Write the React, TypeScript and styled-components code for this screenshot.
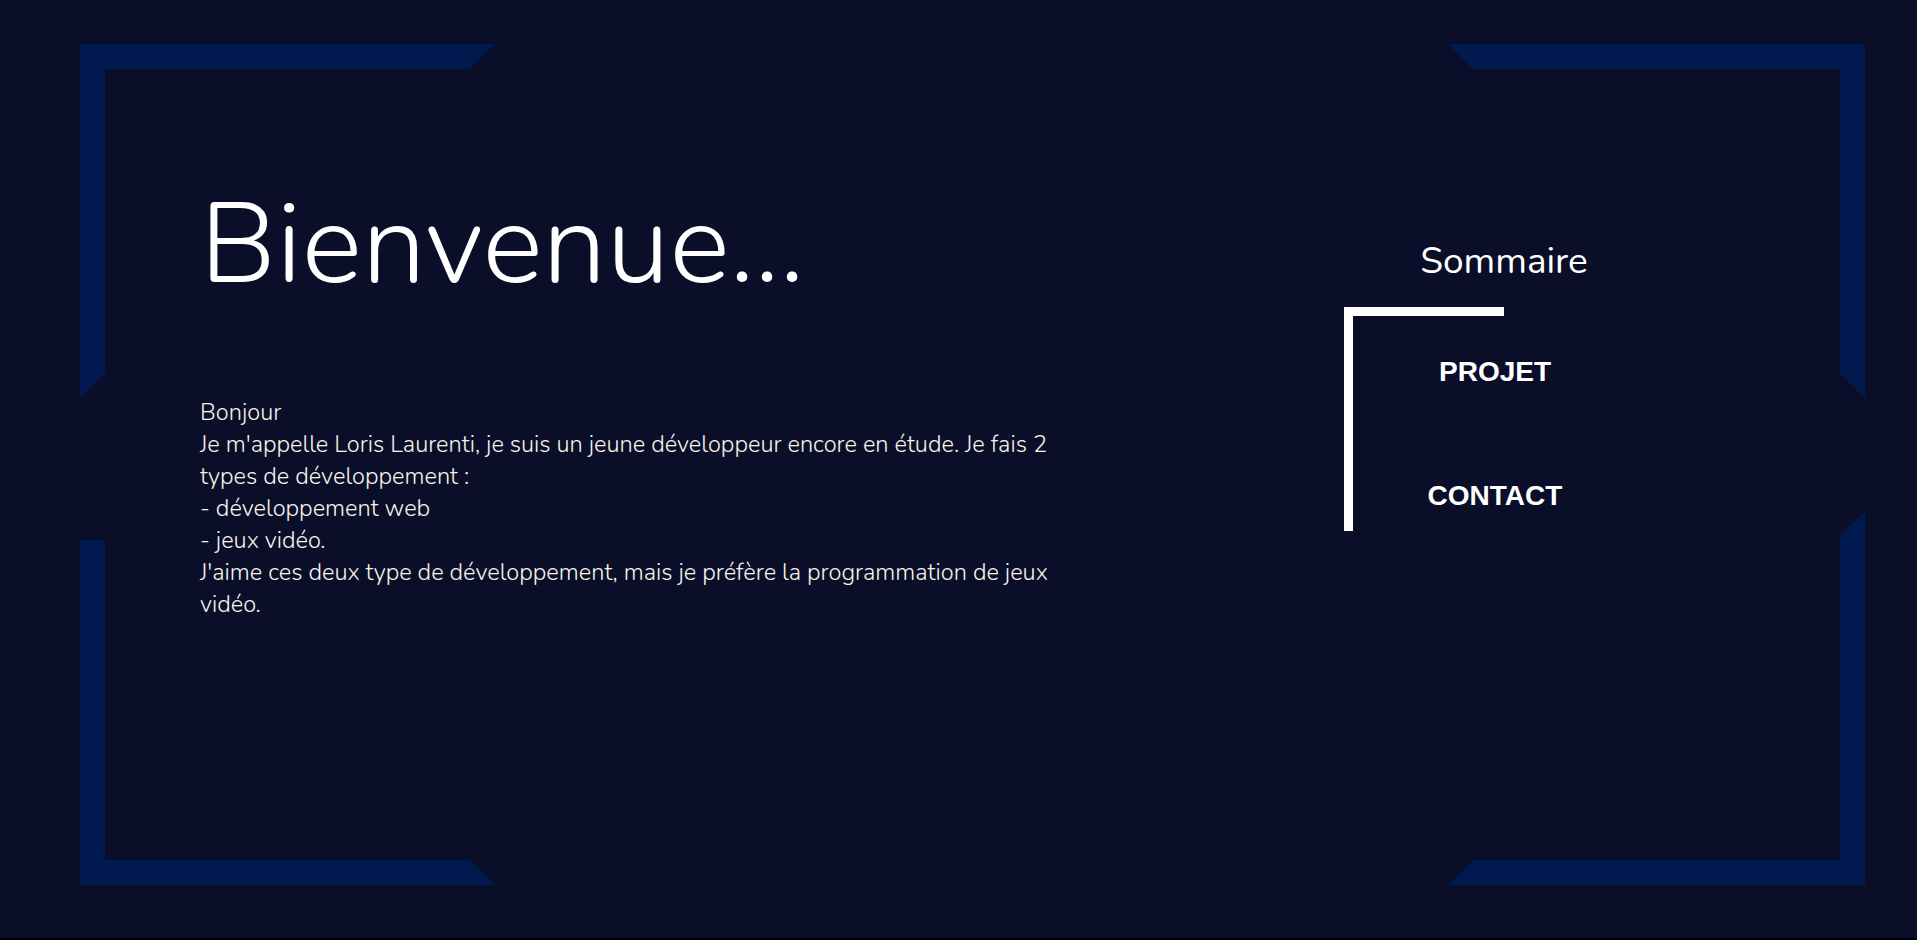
import React from "react";
import styled, { createGlobalStyle } from "styled-components";

const GlobalStyle = createGlobalStyle`
  html, body {
    margin: 0;
    padding: 0;
    background: #000000;
  }
  body {
    font-family: "Nunito", "Lato", "Noto Sans", sans-serif;
  }
  * { box-sizing: border-box; }
`;

const Page = styled.div`
  position: relative;
  height: 938px;
  background: #0a0e28;
  overflow: hidden;
  display: flex;
  align-items: flex-start;
  padding: 186px 0 0 200px;
`;

const Corner = styled.svg<{ $top: number; $left: number }>`
  position: absolute;
  display: block;
  top: ${(p) => p.$top}px;
  left: ${(p) => p.$left}px;
  pointer-events: none;
`;

const Main = styled.main`
  width: 866px;
  display: flex;
  flex-direction: column;
`;

const Title = styled.h1`
  margin: 0;
  font-family: "Nunito", "Lato", sans-serif;
  font-weight: 300;
  font-size: 114px;
  line-height: 117px;
  color: #ffffff;
`;

const Intro = styled.p`
  margin: 93px 0 0;
  font-family: "Nunito", "Lato", sans-serif;
  font-weight: 300;
  font-size: 23.6px;
  line-height: 32px;
  color: #f8f5ea;
`;

const Sidebar = styled.aside`
  margin-left: auto;
  margin-right: 253px;
  margin-top: 52px;
  width: 320px;
  display: flex;
  flex-direction: column;
`;

const SideTitle = styled.h2`
  margin: 0;
  text-align: center;
  font-family: "Nunito", "Lato", sans-serif;
  font-weight: 400;
  font-size: 37px;
  line-height: 46px;
  color: #ffffff;
`;

const NavBox = styled.nav`
  margin-top: 23px;
  width: 293px;
  border-left: 9px solid #ffffff;
  display: flex;
  flex-direction: column;
`;

const TopBar = styled.div`
  width: 151px;
  height: 9px;
  background: #ffffff;
`;

const NavList = styled.div`
  display: flex;
  flex-direction: column;
  gap: 92px;
  padding: 40px 0 19px;
`;

const NavLink = styled.a`
  display: block;
  text-align: center;
  font-family: "Liberation Sans", Arial, sans-serif;
  font-weight: 700;
  font-size: 28px;
  line-height: 32px;
  color: #ffffff;
  text-decoration: none;
  text-transform: uppercase;
`;

const BLUE = "#001a50";

export default function App() {
  return (
    <>
      <GlobalStyle />
      <Page>
        <Corner $top={44} $left={80} width={415} height={354} viewBox="0 0 415 354">
          <polygon points="0,0 415,0 390,25 25,25 25,329 0,354" fill={BLUE} />
        </Corner>
        <Corner $top={540} $left={80} width={415} height={345} viewBox="0 0 415 345">
          <polygon points="0,0 25,0 25,320 390,320 415,345 0,345" fill={BLUE} />
        </Corner>
        <Corner $top={44} $left={1448} width={417} height={354} viewBox="0 0 417 354">
          <polygon points="0,0 417,0 417,354 392,329 392,25 25,25" fill={BLUE} />
        </Corner>
        <Corner $top={511} $left={1448} width={417} height={374} viewBox="0 0 417 374">
          <polygon points="417,0 417,374 0,374 25,349 392,349 392,24" fill={BLUE} />
        </Corner>

        <Main>
          <Title>Bienvenue...</Title>
          <Intro>
            Bonjour
            <br />
            Je m'appelle Loris Laurenti, je suis un jeune développeur encore en étude. Je fais 2 types de développement :
            <br />
            - développement web
            <br />
            - jeux vidéo.
            <br />
            J'aime ces deux type de développement, mais je préfère la programmation de jeux vidéo.
          </Intro>
        </Main>

        <Sidebar>
          <SideTitle>Sommaire</SideTitle>
          <NavBox>
            <TopBar />
            <NavList>
              <NavLink href="#projet">Projet</NavLink>
              <NavLink href="#contact">Contact</NavLink>
            </NavList>
          </NavBox>
        </Sidebar>
      </Page>
    </>
  );
}
